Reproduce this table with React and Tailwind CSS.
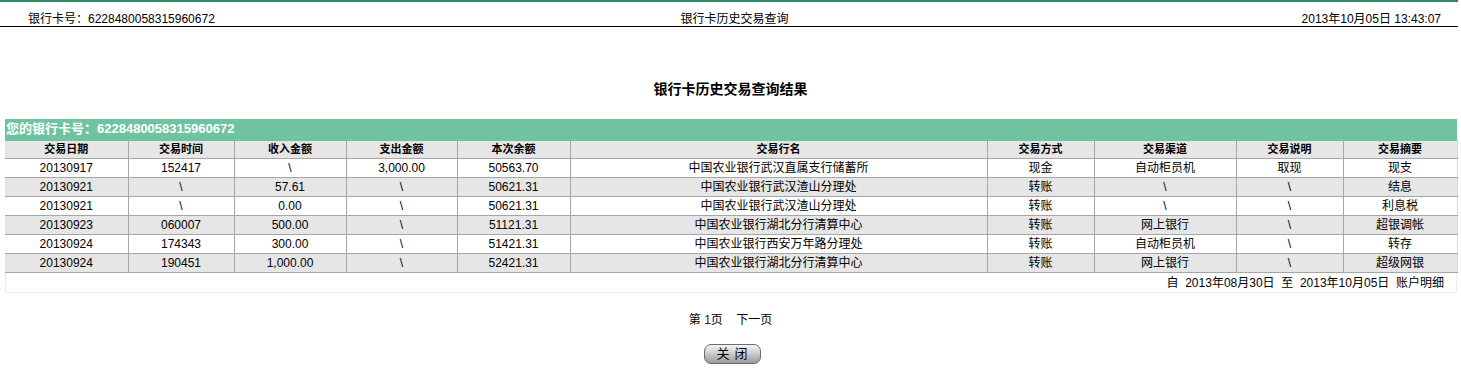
const rows = [
    ['20130917', '152417', '\\', '3,000.00', '50563.70', '中国农业银行武汉直属支行储蓄所', '现金', '自动柜员机', '取现', '现支'],
    ['20130921', '\\', '57.61', '\\', '50621.31', '中国农业银行武汉渣山分理处', '转账', '\\', '\\', '结息'],
    ['20130921', '\\', '0.00', '\\', '50621.31', '中国农业银行武汉渣山分理处', '转账', '\\', '\\', '利息税'],
    ['20130923', '060007', '500.00', '\\', '51121.31', '中国农业银行湖北分行清算中心', '转账', '网上银行', '\\', '超银调帐'],
    ['20130924', '174343', '300.00', '\\', '51421.31', '中国农业银行西安万年路分理处', '转账', '自动柜员机', '\\', '转存'],
    ['20130924', '190451', '1,000.00', '\\', '52421.31', '中国农业银行湖北分行清算中心', '转账', '网上银行', '\\', '超级网银'],
];

const headers = ['交易日期', '交易时间', '收入金额', '支出金额', '本次余额', '交易行名', '交易方式', '交易渠道', '交易说明', '交易摘要'];
const widths = ['w-[123px]', 'w-[106px]', 'w-[112px]', 'w-[111px]', 'w-[113px]', 'w-[417px]', 'w-[107px]', 'w-[142px]', 'w-[107px]', 'w-[114px]'];

const App = () => {
    return (
        <div className="w-[1461px] h-[371px] bg-white text-black font-['Liberation_Sans','Noto_Sans_CJK_SC',sans-serif] text-[12px] overflow-hidden">
            {/* Top bar */}
            <div className="h-[2px] w-[1458px] bg-[#2f8a64]" />
            <div className="w-[1458px] h-[25px] border-b border-black flex items-end px-[28px] justify-between leading-[14px]">
                <span className="w-[300px]">银行卡号：6228480058315960672</span>
                <span>银行卡历史交易查询</span>
                <span className="w-[300px] text-right mr-[-11px]">2013年10月05日 13:43:07</span>
            </div>

            <h1 className="text-center font-bold text-[14px] mt-[52px] h-[20px] leading-[20px]">银行卡历史交易查询结果</h1>

            <div className="ml-[5px] w-[1452px] mt-[20px]">
                <div className="h-[22px] bg-[#6fc3a0] text-white font-bold text-[13px] leading-[20px] px-[1px]">
                    您的银行卡号：6228480058315960672
                </div>
                <table className="w-[1452px] table-fixed border-collapse">
                    <thead>
                        <tr className="bg-[#e6e6e6] h-[17px]">
                            {headers.map((h, i) => (
                                <th key={h} className={`${widths[i]} border-x border-b border-[#a6a6a6] first:border-l-0 last:border-r-[#d9d9d9] text-[11px] font-bold leading-[16px] p-0`}>
                                    {h}
                                </th>
                            ))}
                        </tr>
                    </thead>
                    <tbody>
                        {rows.map((r, ri) => (
                            <tr key={ri} className={`h-[19px] ${ri % 2 === 1 ? 'bg-[#e6e6e6]' : 'bg-white'}`}>
                                {r.map((c, ci) => (
                                    <td key={ci} className="border-x border-b border-[#a6a6a6] first:border-l-0 last:border-r-[#d9d9d9] text-center leading-[18px] p-0">
                                        {c}
                                    </td>
                                ))}
                            </tr>
                        ))}
                    </tbody>
                </table>
                <div className="h-[20px] border-x border-b border-[#ececec] text-right pr-[12px] leading-[20px]">
                    自&nbsp; 2013年08月30日&nbsp; 至&nbsp; 2013年10月05日&nbsp; 账户明细
                </div>
            </div>

            <div className="text-center mt-[19px] h-[16px] leading-[16px]">
                第 <span className="text-[#1a1a33]">1</span>页&nbsp;&nbsp;&nbsp; 下一页
            </div>

            <div className="flex justify-center mt-[16px]">
                <button className="ml-[3px] w-[57px] h-[20px] rounded-[7px] border border-[#6b6b6b] bg-gradient-to-b from-[#f4f4f4] via-[#c9c9c9] to-[#9a9a9a] text-[13px] leading-[18px] tracking-[5px] pl-[5px]">
                    关闭
                </button>
            </div>
            <div className="ml-[652px] mt-[7px] w-[590px] h-[1px] bg-[#eeeeee]" />
        </div>
    );
};

export default App;
